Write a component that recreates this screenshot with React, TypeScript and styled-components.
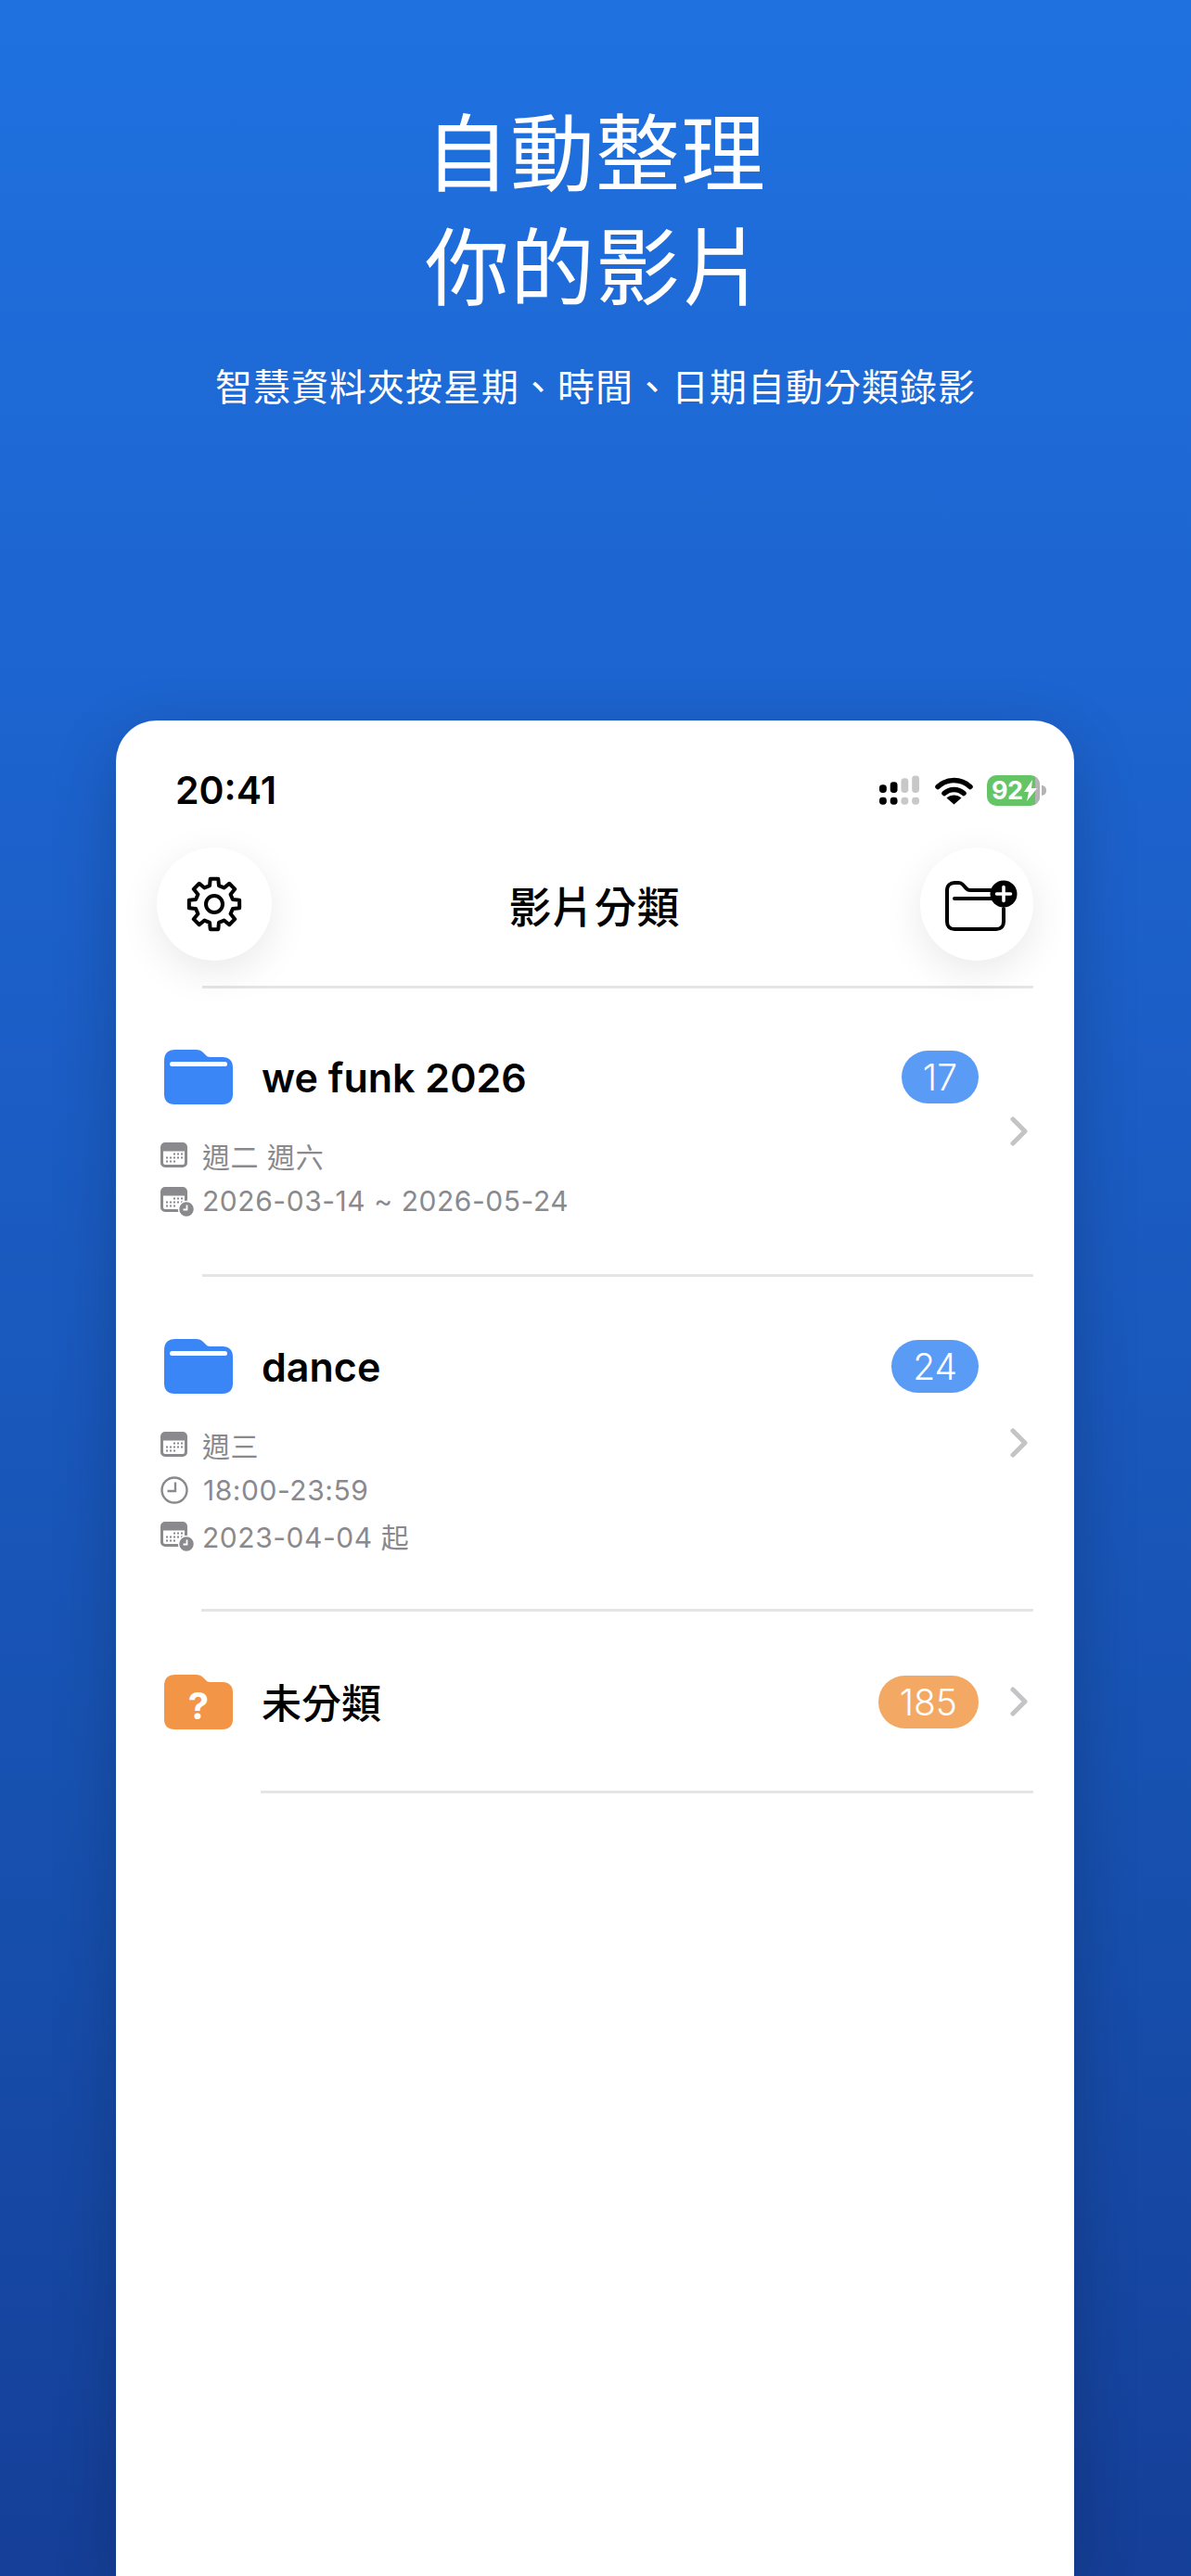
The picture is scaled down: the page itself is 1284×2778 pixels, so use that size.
import React, { FC } from "react";
import styled, { createGlobalStyle } from "styled-components";

const GlobalStyle = createGlobalStyle`
  html, body {
    margin: 0;
    padding: 0;
    background: #1a56bd;
  }
  * {
    box-sizing: border-box;
  }
`;

const fontStack = `Inter, "Noto Sans CJK TC", "Noto Sans", sans-serif`;
const cjkStack = `"Noto Sans CJK TC", Inter, sans-serif`;

const Page = styled.div`
  width: 1284px;
  height: 2778px;
  overflow: hidden;
  display: flex;
  flex-direction: column;
  background: linear-gradient(180deg, #1f71e0 0%, #1c60ca 35%, #1751b0 70%, #153f98 100%);
  font-family: ${fontStack};
`;

const Hero = styled.header`
  height: 777px;
  padding-top: 98px;
  display: flex;
  flex-direction: column;
  align-items: center;
  color: #fff;
  font-family: ${cjkStack};
`;

const HeroTitle = styled.h1`
  margin: 0;
  font-size: 91px;
  font-weight: 400;
  line-height: 123px;
  letter-spacing: 1px;
  text-align: center;
`;

const HeroSub = styled.p`
  margin: 41px 0 0;
  font-size: 40px;
  font-weight: 400;
  line-height: 60px;
  letter-spacing: 1px;
`;

const Card = styled.main`
  flex: 1;
  margin: 0 126px 0 125px;
  background: #fff;
  border-radius: 44px 44px 0 0;
  box-shadow: 0 20px 70px rgba(0, 0, 0, 0.2);
`;

const StatusBar = styled.div`
  height: 60px;
  margin-top: 45px;
  padding: 0 30px 0 64px;
  display: flex;
  align-items: center;
  justify-content: space-between;
`;

const Clock = styled.span`
  font-size: 41px;
  font-weight: 600;
  color: #000;
`;

const StatusIcons = styled.div`
  display: flex;
  align-items: center;
  gap: 15px;
`;

const SignalIcon = styled.svg`
  margin-right: 2px;
`;

const Battery = styled.div`
  position: relative;
  width: 57px;
  height: 33px;
  border-radius: 10px;
  overflow: hidden;
  background: #65c466;
  color: #fff;
  font-size: 27px;
  font-weight: 700;
  line-height: 33px;
  padding-left: 5px;
  display: flex;
  align-items: center;
  letter-spacing: -0.5px;
  &::after {
    content: "";
    position: absolute;
    top: 0;
    right: 0;
    bottom: 0;
    width: 5px;
    background: #b4b4b4;
  }
`;

const BatteryWrap = styled.div`
  display: flex;
  align-items: center;
  gap: 2px;
  &::after {
    content: "";
    width: 5px;
    height: 11px;
    background: #b4b4b4;
    border-radius: 0 5px 5px 0;
  }
`;

const BoltIcon = styled.svg`
  position: absolute;
  right: 3px;
  top: 5px;
  z-index: 1;
`;

const NavBar = styled.nav`
  margin-top: 32px;
  padding: 0 44px 0 44px;
  display: flex;
  align-items: center;
  justify-content: space-between;
`;

const RoundButton = styled.button<{ $width: number }>`
  width: ${(p) => p.$width}px;
  height: 122px;
  border: 0;
  border-radius: 50%;
  background: #fff;
  padding: 0;
  display: flex;
  align-items: center;
  justify-content: center;
  box-shadow: 0 12px 44px rgba(0, 0, 0, 0.09);
`;

const NavTitle = styled.h2`
  margin: 0 4px 0 0;
  font-family: ${cjkStack};
  font-size: 46px;
  font-weight: 500;
  letter-spacing: 0;
  color: #000;
`;

const Divider = styled.div<{ $inset: number; $top?: number }>`
  height: 3px;
  margin: ${(p) => p.$top ?? 0}px 44px 0 ${(p) => p.$inset}px;
  background: #e5e5e5;
`;

const Row = styled.section`
  padding: 0 50px 0 48px;
  display: flex;
  align-items: center;
`;

const RowBody = styled.div<{ $top: number; $bottom: number }>`
  flex: 1;
  min-width: 0;
  padding: ${(p) => p.$top}px 0 ${(p) => p.$bottom}px;
`;

const RowHead = styled.div`
  display: flex;
  align-items: center;
  padding-left: 4px;
`;

const FolderName = styled.span`
  flex: 1;
  margin-left: 31px;
  font-family: ${fontStack};
  font-size: 43px;
  font-weight: 600;
  color: #000;
`;

const CjkName = styled(FolderName)`
  padding-bottom: 2px;
  font-family: ${cjkStack};
  font-size: 43px;
  font-weight: 500;
  line-height: 1;
`;

const Badge = styled.span<{ $color: string }>`
  height: 57px;
  padding: 0 23px;
  border-radius: 29px;
  display: flex;
  align-items: center;
  color: #fff;
  font-size: 39px;
  font-weight: 300;
  background: ${(p) => p.$color};
`;

const Chevron = styled.svg`
  flex: none;
  margin-left: 34px;
`;

const MetaList = styled.div`
  margin-top: 30px;
`;

const MetaRow = styled.div`
  height: 49px;
  display: flex;
  align-items: center;
  gap: 16px;
  color: #8a8a8e;
  font-size: 30px;
  letter-spacing: 0.55px;
`;

const MetaIcon = styled.svg`
  flex: none;
`;

const ClockCalendar = styled(MetaIcon)`
  margin: 3px -7px 0 0;
`;

const PlusGlyph = styled.svg`
  margin: 4px 0 0 10px;
`;

const FOLDER = "M12 0h22c4 0 6 1 8 3l3 3c1 1 2 2 5 2h13c7 0 11 4 11 11v29c0 7-4 11-11 11H11C4 59 0 55 0 48V12C0 4 4 0 12 0Z";

const Folder: FC<{ color: string; question?: boolean }> = ({ color, question }) => (
  <svg width="74" height="59" viewBox="0 0 74 59">
    <path d={FOLDER} fill={color} />
    {question ? (
      <text x="37" y="48" textAnchor="middle" fill="#fff" fontSize="40" fontWeight="700" fontFamily="Inter, sans-serif">
        ?
      </text>
    ) : (
      <rect x="6" y="13" width="62" height="5" rx="2.5" fill="#fff" />
    )}
  </svg>
);

const gearPath = (() => {
  const pt = (r: number, deg: number) => {
    const a = ((deg - 90) * Math.PI) / 180;
    return `${(30 + r * Math.cos(a)).toFixed(2)} ${(30 + r * Math.sin(a)).toFixed(2)}`;
  };
  let d = "";
  for (let i = 0; i < 8; i++) {
    const c = i * 45;
    d += `${i === 0 ? "M" : "L"}${pt(20.5, c - 14)} L${pt(27.5, c - 9)} L${pt(27.5, c + 9)} L${pt(20.5, c + 14)} `;
  }
  return d + "Z";
})();

const Gear: FC = () => (
  <svg width="60" height="60" viewBox="0 0 60 60" fill="none" stroke="#000" strokeWidth="4" strokeLinejoin="round">
    <path d={gearPath} />
    <circle cx="30" cy="30" r="9" />
  </svg>
);

const FolderPlus: FC = () => (
  <PlusGlyph width="78" height="56" viewBox="0 0 78 56" fill="none">
    <path
      d="M50 11H27c-2 0-3-.5-4-1.6L19 5c-1.200-1.300-2.500-2-4.500-2H10C5.500 3 2 6 2 11v34c0 5 3 8 8 8h45c5 0 8-3 8-8V31"
      stroke="#000"
      strokeWidth="4"
      strokeLinecap="round"
    />
    <path d="M10 20h40" stroke="#000" strokeWidth="4" strokeLinecap="round" />
    <circle cx="63" cy="15" r="14.500" fill="#000" />
    <path d="M63 7.500v15M55.500 15h15" stroke="#fff" strokeWidth="3.600" strokeLinecap="round" />
  </PlusGlyph>
);

const Signal: FC = () => (
  <SignalIcon width="43" height="33" viewBox="0 0 44 33">
    <g fill="#000">
      <rect x="0" y="10" width="8" height="9" rx="3.500" />
      <rect x="12" y="7" width="8" height="12" rx="3.500" />
      <rect x="0" y="24" width="8" height="8" rx="3.500" />
      <rect x="12" y="24" width="8" height="8" rx="3.500" />
    </g>
    <g fill="#c8c8c8">
      <rect x="24" y="3" width="8" height="16" rx="3.500" />
      <rect x="36" y="0" width="8" height="19" rx="3.500" />
      <rect x="24" y="24" width="8" height="8" rx="3.500" />
      <rect x="36" y="24" width="8" height="8" rx="3.500" />
    </g>
  </SignalIcon>
);

const Wifi: FC = () => (
  <svg width="41" height="31" viewBox="0 0 41 31" fill="none">
    <path d="M3 11.500C13 2.200 28 2.200 38 11.500" stroke="#000" strokeWidth="5.500" strokeLinecap="round" />
    <path d="M10 18.500C16 13 25 13 31 18.500" stroke="#000" strokeWidth="5.500" strokeLinecap="round" />
    <path d="M20.500 30.500L12.500 23.500C17 19.500 24 19.500 28.500 23.500Z" fill="#000" />
  </svg>
);

const CalendarShape: FC = () => (
  <>
    <rect x="1.500" y="1.500" width="26" height="24" rx="3.500" fill="#fff" stroke="#8a8a8e" strokeWidth="3" />
    <path d="M1.500 9V5a3.500 3.500 0 0 1 3.500-3.500h19A3.500 3.500 0 0 1 27.500 5v4Z" fill="#8a8a8e" stroke="#8a8a8e" />
    {[12.5, 16.5, 20.5].map((y, r) =>
      [7, 11, 15, 19, 23].map((x, c) =>
        (r === 0 && c < 2) || (r === 2 && c > 2) ? null : (
          <rect key={`${x}-${y}`} x={x - 1} y={y - 1} width="2" height="2" fill="#8a8a8e" />
        ),
      ),
    )}
  </>
);

const CalendarIcon: FC = () => (
  <MetaIcon width="29" height="27" viewBox="0 0 29 27">
    <CalendarShape />
  </MetaIcon>
);

const CalendarClockIcon: FC = () => (
  <ClockCalendar width="36" height="32" viewBox="0 0 36 32">
    <CalendarShape />
    <circle cx="28" cy="24" r="8.500" fill="#8a8a8e" stroke="#fff" strokeWidth="1.500" />
    <path d="M28.500 19.500v5h-4" fill="none" stroke="#fff" strokeWidth="1.800" />
  </ClockCalendar>
);

const ClockIcon: FC = () => (
  <MetaIcon width="30" height="30" viewBox="0 0 30 30" fill="none" stroke="#8a8a8e" strokeWidth="2.400">
    <circle cx="15" cy="15" r="13.500" />
    <path d="M16 6.500V16H7.500" />
  </MetaIcon>
);

const ChevronRight: FC = () => (
  <Chevron width="19" height="32" viewBox="0 0 19 32" fill="none">
    <path d="M3 3l13 13L3 29" stroke="#c4c4c6" strokeWidth="5" strokeLinecap="round" strokeLinejoin="round" />
  </Chevron>
);

const BLUE = "#3a86f7";
const ORANGE = "#f39546";

export default function App() {
  return (
    <Page>
      <GlobalStyle />
      <Hero>
        <HeroTitle>
          自動整理
          <br />
          你的影片
        </HeroTitle>
        <HeroSub>智慧資料夾按星期、時間、日期自動分類錄影</HeroSub>
      </Hero>
      <Card>
        <StatusBar>
          <Clock>20:41</Clock>
          <StatusIcons>
            <Signal />
            <Wifi />
            <BatteryWrap>
              <Battery>
                92
                <BoltIcon width="14" height="23" viewBox="0 0 14 23">
                  <path d="M9 0L0 13h5l-2 10 11-14H8Z" fill="#fff" />
                </BoltIcon>
              </Battery>
            </BatteryWrap>
          </StatusIcons>
        </StatusBar>
        <NavBar>
          <RoundButton $width={124}>
            <Gear />
          </RoundButton>
          <NavTitle>影片分類</NavTitle>
          <RoundButton $width={122}>
            <FolderPlus />
          </RoundButton>
        </NavBar>
        <Divider $inset={93} $top={27} />

        <Row>
          <RowBody $top={66} $bottom={55}>
            <RowHead>
              <Folder color={BLUE} />
              <FolderName>we funk 2026</FolderName>
              <Badge $color="#5a9cf5">17</Badge>
            </RowHead>
            <MetaList>
              <MetaRow>
                <CalendarIcon />
                週二 週六
              </MetaRow>
              <MetaRow>
                <CalendarClockIcon />
                2026-03-14 ~ 2026-05-24
              </MetaRow>
            </MetaList>
          </RowBody>
          <ChevronRight />
        </Row>
        <Divider $inset={93} />

        <Row>
          <RowBody $top={67} $bottom={55}>
            <RowHead>
              <Folder color={BLUE} />
              <FolderName>dance</FolderName>
              <Badge $color="#5a9cf5">24</Badge>
            </RowHead>
            <MetaList>
              <MetaRow>
                <CalendarIcon />
                週三
              </MetaRow>
              <MetaRow>
                <ClockIcon />
                18:00-23:59
              </MetaRow>
              <MetaRow>
                <CalendarClockIcon />
                2023-04-04 起
              </MetaRow>
            </MetaList>
          </RowBody>
          <ChevronRight />
        </Row>
        <Divider $inset={92} />

        <Row>
          <RowBody $top={68} $bottom={66}>
            <RowHead>
              <Folder color={ORANGE} question />
              <CjkName>未分類</CjkName>
              <Badge $color="#f3a964">185</Badge>
            </RowHead>
          </RowBody>
          <ChevronRight />
        </Row>
        <Divider $inset={156} />
      </Card>
    </Page>
  );
}
